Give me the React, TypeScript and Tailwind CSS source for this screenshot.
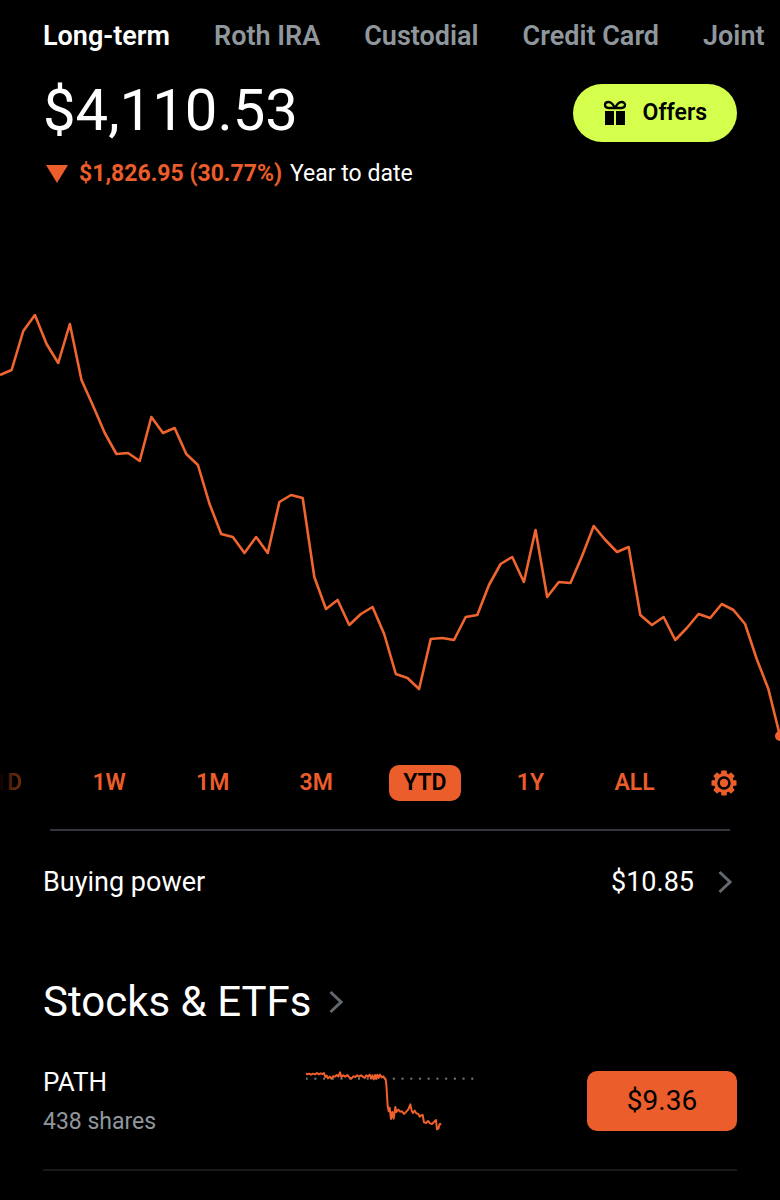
import { FC } from 'react';

const accounts = ['Long-term', 'Roth IRA', 'Custodial', 'Credit Card', 'Joint'];

const ranges = ['1D', '1W', '1M', '3M', 'YTD', '1Y', 'ALL'];

const history = [
  375, 370, 331, 315, 344, 363, 324, 380, 406, 433, 454, 453, 461, 417, 433,
  428, 454, 465, 504, 534, 537, 553, 537, 553, 502, 495, 498, 577, 609, 600,
  625, 614, 607, 634, 674, 678, 689, 639, 638, 640, 617, 615, 585, 564, 557,
  582, 530, 597, 582, 583, 556, 526, 540, 552, 547, 615, 625, 617, 640, 628,
  614, 618, 604, 610, 624, 659, 689, 736,
];

const historyPoints = history
  .map((y, i) => `${(i * 780) / (history.length - 1)},${y}`)
  .join(' ');

const GiftIcon: FC = () => (
  <svg viewBox="0 0 24 26" className="h-[26px] w-6" aria-hidden="true">
    <path
      d="M12 8 C10 4 8 2 5.500 2 C3.300 2 2 3.200 2 4.800 C2 6.600 3.300 8 5.500 8 H18.500 C20.700 8 22 6.600 22 4.800 C22 3.200 20.700 2 18.500 2 C16 2 14 4 12 8 Z"
      fill="none"
      stroke="currentColor"
      strokeWidth="2.300"
      strokeLinejoin="round"
    />
    <path d="M2 11h9v14H2zM13 11h9v14h-9z" fill="currentColor" />
  </svg>
);

const GearIcon: FC = () => (
  <svg viewBox="-13 -13 26 26" className="h-[26px] w-[26px]" aria-hidden="true">
    {[0, 45, 90, 135].map((angle) => (
      <rect
        key={angle}
        x="-2.800"
        y="-12.500"
        width="5.600"
        height="25"
        rx="0.800"
        fill="currentColor"
        transform={`rotate(${angle})`}
      />
    ))}
    <circle r="8.300" fill="black" stroke="currentColor" strokeWidth="3.200" />
    <circle r="4.200" fill="currentColor" />
  </svg>
);

const Chevron: FC = () => (
  <svg viewBox="0 0 14 24" className="h-6 w-[14px] text-[#62686d]" aria-hidden="true">
    <path
      d="M1.500 2 L12 12 L1.500 22"
      fill="none"
      stroke="currentColor"
      strokeWidth="3"
    />
  </svg>
);

const Sparkline: FC = () => (
  <svg viewBox="48 40 504 186" className="w-[168px]" role="img" aria-label="PATH price">
    <path
      d="M50 66 H552"
      stroke="#6c7377"
      strokeWidth="7"
      strokeLinecap="round"
      strokeDasharray="0 26.150"
    />
    <polyline
      points="48,50 52,53 57,51 63,54 69,51 75,53 81,49 87,53 92,50 98,52 102,49 106,61 110,57 114,65 119,60 124,66 129,59 135,60 140,55 145,60 150,47 154,61 160,56 166,60 172,55 178,62 184,66 190,59 196,61 201,56 207,60 213,56 219,60 224,64 229,56 234,60 239,54 243,66 247,56 251,68 255,55 258,66 262,54 266,64 270,54 275,62 280,59 284,65 287,69 289,84 291,115 293,148 296,164 299,153 303,187 307,166 311,186 316,151 319,166 325,159 330,165 336,164 342,172 349,165 355,158 361,143 365,162 369,169 374,162 379,170 385,172 389,180 394,176 398,175 402,197 408,199 414,193 420,200 426,202 432,196 438,190 441,218 445,216 449,202 454,203"
      fill="none"
      stroke="#f0602c"
      strokeWidth="6"
      strokeLinejoin="round"
    />
  </svg>
);

const App: FC = () => {
  return (
    <main className="min-h-screen w-full overflow-hidden bg-black font-['Roboto',sans-serif] text-white">
      <nav className="flex gap-11 overflow-hidden pt-5 pl-[43px] text-[27px] leading-8 font-semibold whitespace-nowrap">
        {accounts.map((name, i) => (
          <a key={name} href="/#" className={i === 0 ? 'text-white' : 'text-[#8f979d]'}>
            {name}
          </a>
        ))}
      </nav>

      <header className="flex items-end justify-between px-[43px] pt-[26px]">
        <h1 className="text-[58px] leading-[64px]">$4,110.53</h1>
        <button className="flex h-[58px] items-center gap-4 rounded-full bg-[#d4ff4c] px-[30px] text-[23px] font-semibold text-black">
          <GiftIcon />
          Offers
        </button>
      </header>

      <p className="flex items-center px-[46px] pt-4 text-[23px] leading-8">
        <svg viewBox="0 0 22 18" className="mr-[11px] h-[18px] w-[22px]" aria-hidden="true">
          <path d="M0 0H22L11 18Z" fill="#eb5d2a" />
        </svg>
        <span className="font-bold text-[#eb5d2a]">$1,826.95 (30.77%)</span>
        <span className="ml-2">Year to date</span>
      </p>

      <svg
        viewBox="0 300 780 450"
        className="mt-[110px] block w-full"
        role="img"
        aria-label="Portfolio value, year to date"
      >
        <polyline
          points={historyPoints}
          fill="none"
          stroke="#f0652f"
          strokeWidth="2.600"
          strokeLinejoin="round"
        />
        <circle cx="780" cy="736" r="5" fill="#f0602c" />
      </svg>

      <div className="-ml-5 flex items-center justify-between pt-[15px] pr-[43px] text-[23px] font-semibold text-[#eb5d2a]">
        {ranges.map((range) => (
          <button
            key={range}
            className={
              range === 'YTD'
                ? 'h-9 rounded-[10px] bg-[#eb5d2a] px-[14px] text-black'
                : range === '1D'
                  ? 'h-9 bg-linear-to-r from-black from-25% to-[#62290f] to-60% bg-clip-text px-[14px] text-transparent'
                  : 'h-9 px-[14px]'
            }
          >
            {range}
          </button>
        ))}
        <button aria-label="Chart settings">
          <GearIcon />
        </button>
      </div>

      <hr className="mx-[50px] mt-7 border-t-2 border-[#35343d]" />

      <a href="/#" className="mt-[31px] flex items-center px-[43px] text-[27px] leading-10">
        <span className="grow">Buying power</span>
        <span className="mr-6">$10.85</span>
        <span className="mr-[5px]">
          <Chevron />
        </span>
      </a>

      <section className="px-[43px] pt-[76px]">
        <h2>
          <a href="/#" className="flex items-center gap-[18px] text-[42px] leading-[48px]">
            Stocks &amp; ETFs
            <Chevron />
          </a>
        </h2>
        <div className="mt-10 grid grid-cols-3 items-center border-b-2 border-[#17191b] pb-[33px]">
          <div>
            <p className="text-[26px] leading-8">PATH</p>
            <p className="mt-[10px] text-[23px] leading-7 text-[#8f979d]">438 shares</p>
          </div>
          <div className="flex justify-center">
            <Sparkline />
          </div>
          <button className="h-[60px] w-[150px] justify-self-end rounded-[10px] bg-[#eb5d2a] text-[28px] text-black">
            $9.36
          </button>
        </div>
      </section>
    </main>
  );
};

export default App;
